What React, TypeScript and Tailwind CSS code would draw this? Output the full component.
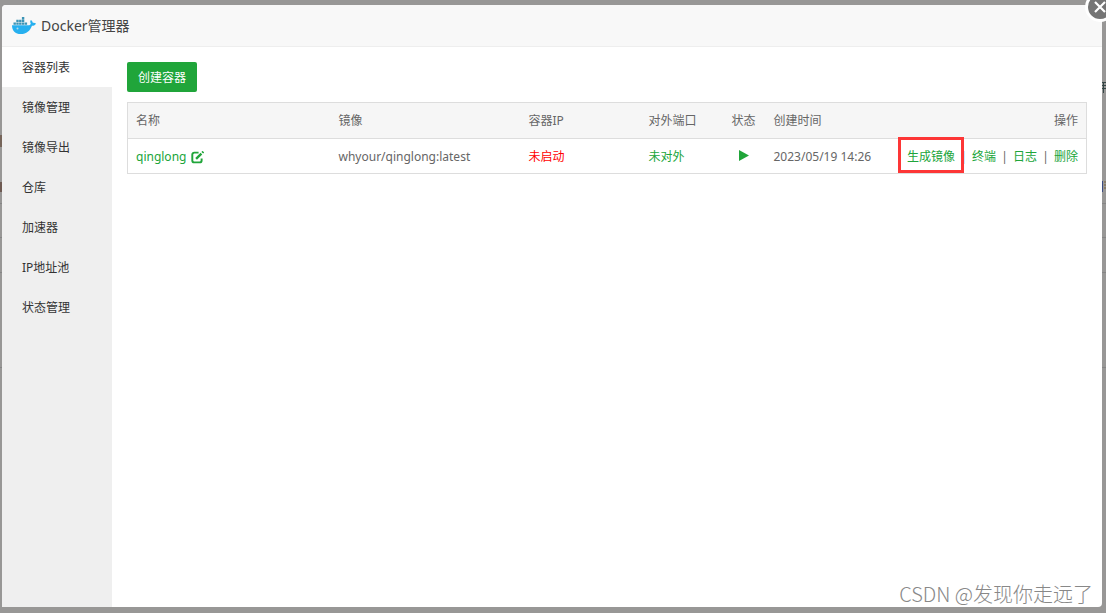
import type { ReactNode } from "react";

const menu = ["容器列表", "镜像管理", "镜像导出", "仓库", "加速器", "IP地址池", "状态管理"];

function DockerLogo() {
  return (
    <svg className="h-5 w-6 shrink-0" viewBox="0 0 24 20" aria-hidden="true">
      <path
        fill="#27b0ef"
        d="M0 9.300h17.200c1-.3 1.600-.9 1.500-2-.7-1.100-.6-2.300.2-3.300 1.100.7 1.700 1.600 1.900 2.800 1.200-.2 2.200 0 3.200.6-.7 1.700-2 2.400-4 2.400C18 15 14.500 18.100 8.800 18.100 3.300 18.100 0 15 0 9.300z"
      />
      <g fill="#3b93b5">
        <path d="M1.500 6.500h2.400v2.300H1.500zM4.300 6.500h2.400v2.300H4.300zM7.100 6.500h2.400v2.300H7.100zM9.900 6.500h2.400v2.300H9.900zM12.700 6.500h2.400v2.300h-2.400z" />
        <path d="M4.300 3.800h2.400v2.300H4.300zM7.100 3.800h2.400v2.300H7.100zM9.900 3.800h2.400v2.300H9.900zM9.900 1.100h2.400v2.300H9.900z" />
      </g>
      <circle cx="5.500" cy="12.600" r="1" fill="#b5d9e8" />
    </svg>
  );
}

function EditIcon() {
  return (
    <svg className="size-[13px]" viewBox="0 0 12 12" fill="none" stroke="#20a53a" aria-hidden="true">
      <path d="M7 1.500H3A1.800 1.800 0 0 0 1.200 3.300v5.400A1.800 1.800 0 0 0 3 10.500h5a1.800 1.800 0 0 0 1.800-1.800V7" strokeWidth="1.800" />
      <path d="M4.700 7.300 9.600 2.400" strokeWidth="2.200" />
      <path d="m10.400 1.600 1-1" strokeWidth="2.200" />
    </svg>
  );
}

function Action({ children }: { children: ReactNode }) {
  return (
    <a href="#" className="text-[#20a53a]">
      {children}
    </a>
  );
}

function Separator() {
  return <span className="w-[7px] text-center">|</span>;
}

function Backdrop() {
  return (
    <div className="absolute inset-0 overflow-hidden" aria-hidden="true">
      <div className="absolute inset-x-0 top-[203px] border-t border-[#858585]" />
      <div className="absolute inset-x-0 top-[237px] border-t border-[#858585]" />
      <div className="absolute inset-x-0 top-[272px] border-t border-[#858585]" />
      <div className="absolute inset-x-0 top-[367px] border-t border-[#858585]" />
      <div className="absolute top-[135px] left-0 h-3 w-0.5 bg-[#76655a]" />
      <div className="absolute top-[182px] left-0 h-2.5 w-0.5 bg-[#6e5a52]" />
      <svg className="absolute top-[82px] right-0 h-3 w-1" viewBox="0 0 4 12" fill="none" stroke="#344646">
        <path d="M0 .500h4M0 3.500h4M0 6.500h4M1.500 0v11" />
      </svg>
      <svg className="absolute top-[181px] right-0 h-3 w-1" viewBox="0 0 4 12" fill="none">
        <path d="M.500 0v11" stroke="#3a4a80" />
        <path d="M2 1h2M2 4h2M2 7h2" stroke="#7d6238" />
      </svg>
    </div>
  );
}

export default function App() {
  return (
    <div className="relative flex min-h-screen flex-col overflow-hidden bg-[#989796] pt-[5px] pr-1 pb-1.5 pl-0.5 font-['Noto_Sans','Noto_Sans_CJK_SC',sans-serif] text-xs text-[#666]">
      <Backdrop />
      <main className="relative flex grow flex-col rounded-sm bg-white">
        <header className="flex h-[42px] items-center gap-[5px] rounded-t-sm border-b border-[#eee] bg-[#f8f8f8] pl-2.5">
          <DockerLogo />
          <h1 className="text-sm text-[#444]">Docker管理器</h1>
        </header>
        <button
          aria-label="关闭"
          className="absolute -top-[13px] -right-[13px] flex size-[30px] items-center justify-center rounded-full border-3 border-white bg-[#757575]"
        >
          <svg className="size-3" viewBox="0 0 12 12" stroke="#fff" strokeWidth="2.200" aria-hidden="true">
            <path d="m1 1 10 10M11 1 1 11" />
          </svg>
        </button>

        <div className="flex grow">
          <nav className="w-[110px] shrink-0 bg-[#efefef]">
            {menu.map((label, i) => (
              <a
                key={label}
                href="#"
                className={
                  i === 0
                    ? "flex h-10 items-center bg-white pt-0.5 pl-5 text-[#333]"
                    : "flex h-10 items-center pt-0.5 pl-5 text-[#333]"
                }
              >
                {label}
              </a>
            ))}
          </nav>

          <section className="min-w-0 grow p-[15px]">
            <button className="h-[30px] rounded-xs bg-[#20a53a] px-[11px] pt-0.5 text-white">创建容器</button>
            <table className="mt-2.5 w-full table-fixed border-collapse border border-[#ddd] text-left whitespace-nowrap">
              <colgroup>
                <col className="w-[203px]" />
                <col className="w-[190px]" />
                <col className="w-[120px]" />
                <col className="w-[83px]" />
                <col className="w-[42px]" />
                <col />
                <col className="w-[196px]" />
              </colgroup>
              <thead className="bg-[#f6f6f6]">
                <tr className="h-9 border-b border-[#ddd]">
                  <th className="px-2 font-normal">名称</th>
                  <th className="px-2 font-normal">镜像</th>
                  <th className="px-2 font-normal">容器IP</th>
                  <th className="px-2 font-normal">对外端口</th>
                  <th className="px-2 font-normal">状态</th>
                  <th className="px-2 font-normal">创建时间</th>
                  <th className="px-2 text-right font-normal">操作</th>
                </tr>
              </thead>
              <tbody>
                <tr className="h-[35px]">
                  <td className="px-2 pt-0.5">
                    <a href="#" className="flex items-center gap-[5px] text-[#20a53a]">
                      qinglong
                      <EditIcon />
                    </a>
                  </td>
                  <td className="px-2 pt-0.5">whyour/qinglong:latest</td>
                  <td className="px-2 pt-0.5 text-[#f00]">未启动</td>
                  <td className="px-2 pt-0.5">
                    <Action>未对外</Action>
                  </td>
                  <td className="px-2">
                    <button aria-label="启动" className="flex w-6 justify-center">
                      <svg className="h-3 w-2.5" viewBox="0 0 10 12" fill="#20a53a" aria-hidden="true">
                        <path d="M0 0 10 5.500 0 11z" />
                      </svg>
                    </button>
                  </td>
                  <td className="px-2 pt-0.5">2023/05/19 14:26</td>
                  <td className="px-2 pt-0.5">
                    <div className="flex items-center justify-end gap-[5px]">
                      <span className="relative">
                        <Action>生成镜像</Action>
                        <span className="pointer-events-none absolute -inset-x-[9px] -top-3 -bottom-2 z-10 border-3 border-[#fd3636]" />
                      </span>
                      <Separator />
                      <Action>终端</Action>
                      <Separator />
                      <Action>日志</Action>
                      <Separator />
                      <Action>删除</Action>
                    </div>
                  </td>
                </tr>
              </tbody>
            </table>
          </section>
        </div>

        <p className="absolute right-[9px] -bottom-px font-['Noto_Sans_CJK_SC',sans-serif] text-xl leading-7 font-light text-[#888]">
          CSDN @发现你走远了
        </p>
      </main>
    </div>
  );
}
